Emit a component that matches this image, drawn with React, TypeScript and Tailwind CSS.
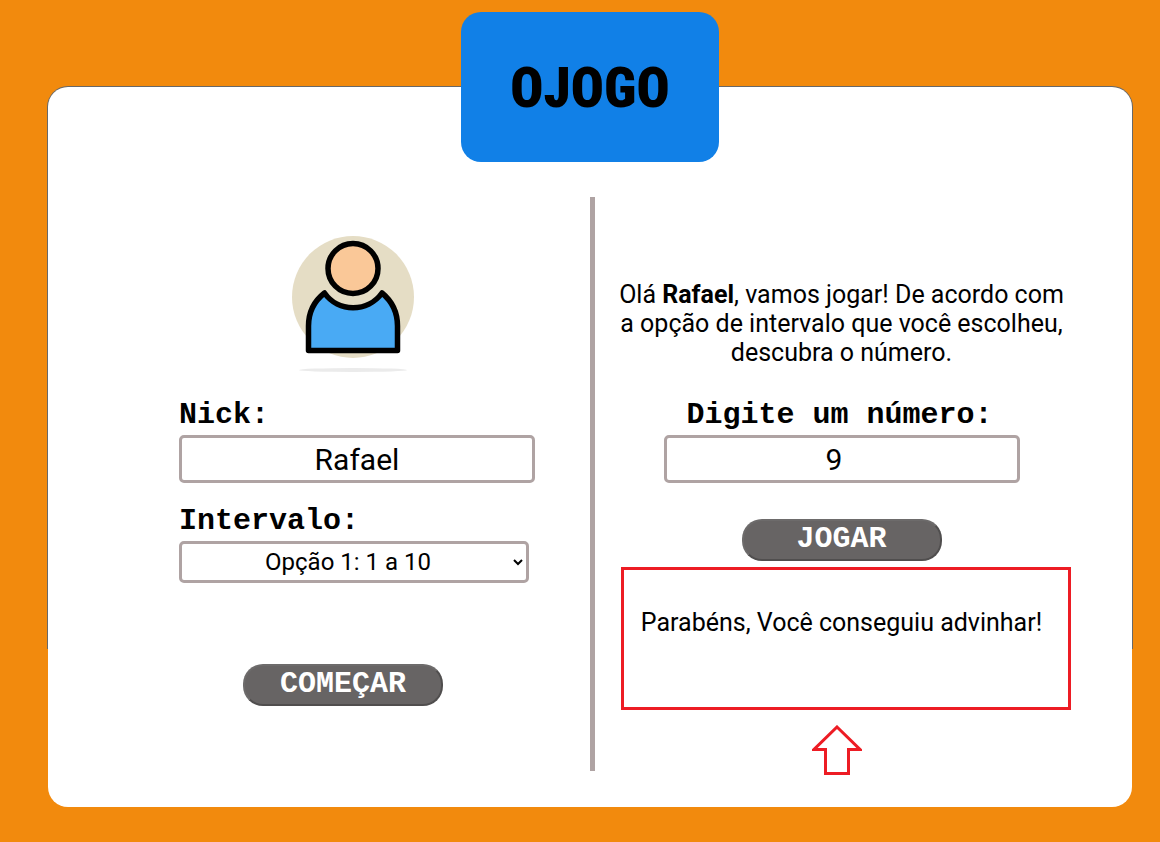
import { useState } from "react";

const labelClass =
  "block font-['Liberation_Mono',monospace] text-[30px] font-bold leading-9";
const fieldClass =
  "rounded-[5px] border-3 border-[#afa3a3] bg-white text-center text-black";
const buttonClass =
  "h-[42px] w-[200px] rounded-[20px] border-2 border-t-[#6d6b6b] border-l-[#6d6b6b] border-r-[#504e4e] border-b-[#504e4e] bg-[#676464] pb-0.5 font-['Liberation_Mono',monospace] text-[30px] font-bold leading-8 text-white";

function Avatar() {
  return (
    <svg viewBox="0 0 130 150" className="ml-28 h-[150px] w-[130px]" aria-hidden="true">
      <circle cx="62" cy="62" r="61" fill="#e5ddc5" />
      <circle cx="62" cy="33.500" r="25" fill="#fac898" stroke="#000" strokeWidth="5.500" />
      <path
        d="M33.500 58C22 67 17.500 78 17.500 91V115.500H106.500V91C106.500 78 102 67 91 58C77 77.500 47 77.500 33.500 58Z"
        fill="#49aaf4"
        stroke="#000"
        strokeWidth="5.500"
        strokeLinejoin="round"
      />
      <ellipse cx="62" cy="135" rx="54" ry="2" fill="#ebebeb" />
    </svg>
  );
}

export default function App() {
  const [nick, setNick] = useState("Rafael");
  const [guess, setGuess] = useState("9");

  return (
    <div className="flex min-h-screen flex-col items-stretch bg-[#f28a0d] pt-3 pr-[27px] pb-[34px] pl-[47px] font-['Roboto',sans-serif] text-black">
      <header className="z-10 mx-auto flex h-[150px] w-[258px] items-center justify-center rounded-[20px] bg-[#1180e7]">
        <h1 className="pt-0.5 font-['Roboto_Condensed','Roboto',sans-serif] text-[55px] font-black leading-none">
          OJOGO
        </h1>
      </header>
      <div className="-mt-[76px] flex grow rounded-[21px] bg-linear-to-b from-[#686868] from-78% to-[#f28a0d] to-78% p-px">
        <main className="grid grow grid-cols-2 rounded-[20px] bg-white pt-[110px] pb-9">
          <section className="flex justify-center pl-[76px]">
            <form className="w-[356px] pt-[38px]" onSubmit={(e) => e.preventDefault()}>
              <Avatar />
              <label htmlFor="nick" className={`${labelClass} mt-3`}>
                Nick:
              </label>
              <input
                id="nick"
                value={nick}
                onChange={(e) => setNick(e.target.value)}
                className={`${fieldClass} mt-0.5 block h-12 w-full text-[30px]`}
              />
              <label htmlFor="intervalo" className={`${labelClass} mt-5`}>
                Intervalo:
              </label>
              <select
                id="intervalo"
                className={`${fieldClass} mt-0.5 block h-[42px] w-[350px] text-2xl`}
              >
                <option>Opção 1: 1 a 10</option>
                <option>Opção 2: 1 a 50</option>
                <option>Opção 3: 1 a 100</option>
              </select>
              <button type="submit" className={`${buttonClass} mt-[81px] ml-16`}>
                COMEÇAR
              </button>
            </form>
          </section>
          <section className="flex justify-center border-l-5 border-[#afa3a3] pr-11">
            <form
              className="flex w-[458px] flex-col items-center pt-[83px]"
              onSubmit={(e) => e.preventDefault()}
            >
              <p className="px-1 text-center text-[25px] leading-[29px]">
                Olá <strong>Rafael</strong>, vamos jogar! De acordo com a opção de intervalo que
                você escolheu, descubra o número.
              </p>
              <label htmlFor="numero" className={`${labelClass} mt-[30px] mr-1`}>
                Digite um número:
              </label>
              <input
                id="numero"
                type="number"
                value={guess}
                onChange={(e) => setGuess(e.target.value)}
                className={`${fieldClass} mt-0.5 h-12 w-[356px] text-[30px]`}
              />
              <button type="submit" className={`${buttonClass} mt-9`}>
                JOGAR
              </button>
              <output className="mt-1.5 block h-[143px] w-[450px] self-end border-3 border-[#ed1c24] pt-[38px] pr-2 text-center text-[25px] leading-[29px]">
                Parabéns, Você conseguiu advinhar!
              </output>
              <svg
                viewBox="0 0 50 50"
                className="mt-[15px] mr-2.5 -mb-1 h-[50px] w-[50px]"
                aria-hidden="true"
              >
                <path
                  d="M25 2L48 24.500H36.500V48.500H13.500V24.500H2Z"
                  fill="none"
                  stroke="#ed1c24"
                  strokeWidth="3"
                />
              </svg>
            </form>
          </section>
        </main>
      </div>
    </div>
  );
}
